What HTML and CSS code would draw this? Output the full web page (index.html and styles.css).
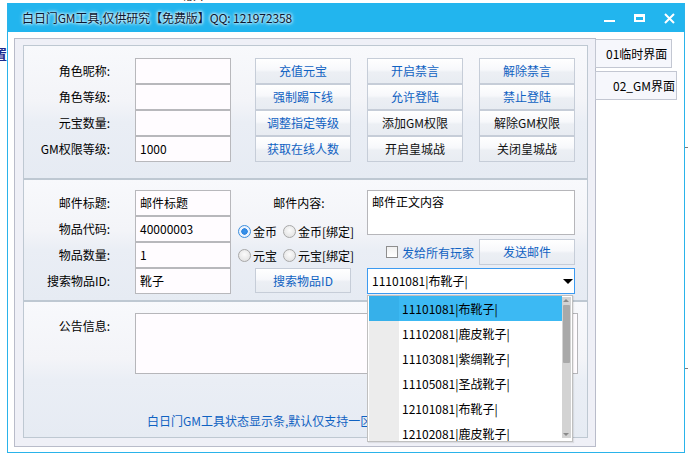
FILE: index.html
```html
<!DOCTYPE html>
<html lang="zh-CN">
<head>
<meta charset="utf-8">
<title>白日门GM工具</title>
<link rel="stylesheet" href="styles.css">
</head>
<body>
<div class="desktop">
  <div class="desk-text">Windows 版本</div>
  <div class="desk-side">置</div>
  <div class="desk-tick tick-a"></div>
  <div class="desk-tick tick-b"></div>

  <div class="window">
    <div class="titlebar">
      <div class="title">白日门GM工具,仅供研究【免费版】QQ: 121972358</div>
      <div class="controls">
        <svg class="ctl" width="11" height="11" viewBox="0 0 11 11"><rect x="0" y="7" width="11" height="2" fill="#fff"/></svg>
        <svg class="ctl" width="11" height="11" viewBox="0 0 11 11"><path d="M0 1h11v8H0z M2 4v3h7V4z" fill="#fff" fill-rule="evenodd"/></svg>
        <svg class="ctl" width="11" height="11" viewBox="0 0 11 11"><path d="M1 1L10 10M10 1L1 10" stroke="#fff" stroke-width="2" fill="none"/></svg>
      </div>
    </div>

    <div class="client">
      <div class="panel">
        <section class="box box1">
          <div class="fields">
            <div class="label">角色昵称:</div><div class="input"></div>
            <div class="label">角色等级:</div><div class="input"></div>
            <div class="label">元宝数量:</div><div class="input"></div>
            <div class="label">GM权限等级:</div><div class="input">1000</div>
          </div>
          <div class="btns">
            <div class="btn blue">充值元宝</div>
            <div class="btn blue">开启禁言</div>
            <div class="btn blue">解除禁言</div>
            <div class="btn blue">强制踢下线</div>
            <div class="btn blue">允许登陆</div>
            <div class="btn blue">禁止登陆</div>
            <div class="btn blue">调整指定等级</div>
            <div class="btn">添加GM权限</div>
            <div class="btn">解除GM权限</div>
            <div class="btn blue">获取在线人数</div>
            <div class="btn">开启皇城战</div>
            <div class="btn">关闭皇城战</div>
          </div>
        </section>

        <section class="box box2">
          <div class="fields">
            <div class="label">邮件标题:</div><div class="input">邮件标题</div>
            <div class="label">物品代码:</div><div class="input">40000003</div>
            <div class="label">物品数量:</div><div class="input">1</div>
            <div class="label">搜索物品ID:</div><div class="input">靴子</div>
          </div>
          <div class="mid-col">
            <div class="mail-label">邮件内容:</div>
            <div class="radio-row">
              <span class="radio on"></span><span class="rtext">金币</span>
              <span class="radio gap"></span><span class="rtext">金币[绑定]</span>
            </div>
            <div class="radio-row">
              <span class="radio"></span><span class="rtext">元宝</span>
              <span class="radio gap"></span><span class="rtext">元宝[绑定]</span>
            </div>
            <div class="btn blue search-btn">搜索物品ID</div>
          </div>
          <div class="right-col">
            <div class="textarea mail-body">邮件正文内容</div>
            <div class="send-row">
              <span class="check"></span><span class="check-text">发给所有玩家</span>
              <div class="btn blue send-btn">发送邮件</div>
            </div>
            <div class="combo">
              <span class="combo-text">11101081|布靴子|</span>
              <span class="combo-arrow"></span>
              <div class="dropdown">
                <div class="items">
                  <div class="item selected"><span class="gut"></span><span class="itxt">11101081|布靴子|</span></div>
                  <div class="item"><span class="gut"></span><span class="itxt">11102081|鹿皮靴子|</span></div>
                  <div class="item"><span class="gut"></span><span class="itxt">11103081|紫绸靴子|</span></div>
                  <div class="item"><span class="gut"></span><span class="itxt">11105081|圣战靴子|</span></div>
                  <div class="item"><span class="gut"></span><span class="itxt">12101081|布靴子|</span></div>
                  <div class="item"><span class="gut"></span><span class="itxt">12102081|鹿皮靴子|</span></div>
                </div>
                <div class="scrollbar">
                  <span class="sb-up"></span>
                  <span class="sb-thumb"></span>
                  <span class="sb-down"></span>
                </div>
              </div>
            </div>
          </div>
        </section>

        <section class="box box3">
          <div class="notice-row">
            <div class="label notice-label">公告信息:</div>
            <div class="textarea notice"></div>
          </div>
          <div class="status">白日门GM工具状态显示条,默认仅支持一区</div>
        </section>
      </div>

      <div class="tabs">
        <div class="tab tab1">01临时界面</div>
        <div class="tab tab2">02_GM界面</div>
      </div>
    </div>
  </div>
</div>
</body>
</html>
```

FILE: styles.css
```css
* { box-sizing: border-box; }
html, body { margin: 0; padding: 0; }
body {
  width: 688px;
  height: 454px;
  overflow: hidden;
  background: #fff;
  font-family: "Noto Sans CJK SC", "Liberation Sans", sans-serif;
  font-size: 12px;
  color: #000;
}
.desktop { position: relative; width: 688px; height: 454px; overflow: hidden; }
.desk-text {
  position: absolute; left: 130px; top: -11px;
  font-size: 12px; line-height: 12px; color: #000; white-space: nowrap;
}
.desk-side {
  position: absolute; left: -6px; top: 47px;
  font-size: 13px; line-height: 14px; color: #1b2a8f; font-weight: bold;
}
.desk-tick { position: absolute; left: 685px; width: 3px; height: 1px; background: #7a7a7a; }
.tick-a { top: 147px; }
.tick-b { top: 368px; }

/* window */
.window {
  position: absolute; left: 7px; top: 3px;
  width: 678px; height: 450px;
  border: 1px solid #2ab3ea; border-top: 0;
  background: #fff;
  display: flex; flex-direction: column;
}
.titlebar {
  height: 29px; flex: none;
  background: #22b5ee;
  display: flex; align-items: center;
  padding-left: 14px;
}
.title {
  flex: 1;
  color: #0b1730;
  line-height: 14px;
  white-space: nowrap;
  letter-spacing: -0.1px;
  text-shadow: 0 0 3px #e8f8ff, 0 0 3px #e8f8ff, 0 0 5px rgba(255,255,255,.8);
}
.controls { display: flex; gap: 19px; padding-right: 9px; align-items: center; margin-top: 1px; }
.ctl { display: block; }

.client { display: flex; align-items: flex-start; padding: 6px 0 0 6px; }

.panel {
  width: 582px; height: 409px; flex: none;
  border: 1px solid #b9bcca;
  background: #eff0f7;
  padding: 6px 7px 8px 8px;
  display: flex; flex-direction: column;
}
.tabs { display: flex; flex-direction: column; gap: 3px; margin-left: -1px; margin-top: 1px; }
.tab {
  height: 29px;
  border: 1px solid #c3c7d2;
  background: #f6f7fc;
  line-height: 27px;
  white-space: nowrap;
}
.tab1 { width: 77px; padding-left: 10px; }
.tab2 { width: 82px; padding-left: 17px; }

/* group boxes */
.box {
  flex: none;
  border: 1px solid #bec8d2;
  background: linear-gradient(#f8f9fc 0%, #f3f4f8 42%, #eaeef5 58%, #e6ebf3 100%);
}
.box1 { height: 134px; display: flex; padding-top: 12px; }
.box2 { height: 122px; display: flex; padding-top: 10px; }
.box3 { height: 137px; padding-top: 11px; }

.fields {
  display: grid;
  grid-template-columns: 86px 96px;
  grid-auto-rows: 26px;
  column-gap: 25px;
  align-content: start;
}
.label { text-align: right; line-height: 26px; white-space: nowrap; }
.input {
  border: 1px solid #b8b8bc;
  background: #fffcff;
  line-height: 24px;
  padding-left: 4px;
  white-space: nowrap;
}

.btns {
  margin-left: 24px;
  display: grid;
  grid-template-columns: repeat(3, 96px);
  grid-auto-rows: 26px;
  column-gap: 16px;
  align-content: start;
}
.btn {
  border: 1px solid #c6cdd8;
  background: linear-gradient(#ffffff 0%, #f7f8fb 45%, #eceff4 55%, #e8ecf2 100%);
  text-align: center;
  line-height: 24px;
  white-space: nowrap;
  color: #111;
}
.btn.blue { color: #1062c2; }

/* mail box */
.mid-col { margin-left: 7px; width: 122px; display: flex; flex-direction: column; }
.mail-label { height: 29px; line-height: 26px; text-align: center; }
.radio-row { height: 24px; display: flex; align-items: center; }
.radio {
  width: 13px; height: 13px; border-radius: 50%;
  border: 1px solid #a8a8a8;
  background: radial-gradient(circle at 50% 40%, #fbfbfb 0%, #e6e6e6 70%, #d8d8d8 100%);
  flex: none;
}
.radio.gap { margin-left: 6px; }
.radio.on {
  border-color: #3d8fdd;
  background: radial-gradient(circle, #3a94ec 0%, #2f86e0 38%, #f0f6ff 45%, #dfeaf8 100%);
}
.rtext { margin-left: 2px; white-space: nowrap; }
.search-btn { margin-top: 1px; margin-left: 17px; width: 96px; height: 25px; line-height: 23px; }

.right-col { margin-left: 7px; width: 208px; display: flex; flex-direction: column; }
.textarea { border: 1px solid #b6b6ba; background: #fff; }
.mail-body { height: 45px; padding: 3px 4px; line-height: 16px; }
.send-row { margin-top: 4px; height: 26px; display: flex; align-items: center; }
.check {
  width: 12px; height: 12px; margin-left: 19px; flex: none;
  border: 1px solid #8e8e8e;
  background: linear-gradient(#f0f0f0, #ffffff);
}
.check-text { margin-left: 4px; color: #1062c2; white-space: nowrap; }
.send-btn { margin-left: auto; width: 96px; height: 26px; }

.combo {
  position: relative;
  margin-top: 3px;
  height: 26px;
  border: 1px solid #3c9af0;
  background: #fff;
  line-height: 24px;
  padding-left: 4px;
}
.combo-text { white-space: nowrap; }
.combo-arrow {
  position: absolute; right: 1px; top: 10px;
  width: 0; height: 0;
  border-left: 5px solid transparent;
  border-right: 5px solid transparent;
  border-top: 5px solid #000;
}
.dropdown {
  position: absolute; left: -1px; top: 26px;
  width: 206px; height: 147px;
  border: 1px solid #bfbfbf;
  background: #fff;
  padding: 0 1px;
  display: flex;
  overflow: hidden;
  box-shadow: 1px 1px 1px rgba(0,0,0,.08);
  z-index: 5;
}
.items { width: 193px; height: 145px; overflow: hidden; }
.item { height: 25px; display: flex; line-height: 25px; background: #fff; }
.gut { width: 30px; flex: none; background: #ececec; }
.itxt { padding-left: 3px; white-space: nowrap; }
.item.selected { background: #3cb9f3; }
.item.selected .gut { background: #36b0ea; }
.scrollbar {
  position: relative;
  width: 9px; margin: 1px 0 3px 0;
  background: #d3d3d3;
}
.sb-up, .sb-down {
  position: absolute; left: 1px; width: 0; height: 0;
  border-left: 3px solid transparent; border-right: 3px solid transparent;
}
.sb-up { top: 2px; border-bottom: 3px solid #8a8a8a; }
.sb-down { bottom: 2px; border-top: 3px solid #8a8a8a; }
.sb-thumb {
  position: absolute; left: 1px; top: 8px;
  width: 7px; height: 58px;
  background: #a9a9a9; border-radius: 1px;
}

/* notice box */
.notice-row { display: flex; align-items: flex-start; }
.notice-label { width: 86px; flex: none; }
.notice { margin-left: 25px; width: 443px; height: 61px; background: #fffcff; }
.status { margin-top: 40px; margin-left: 123px; line-height: 14px; color: #1062c2; white-space: nowrap; }
```
